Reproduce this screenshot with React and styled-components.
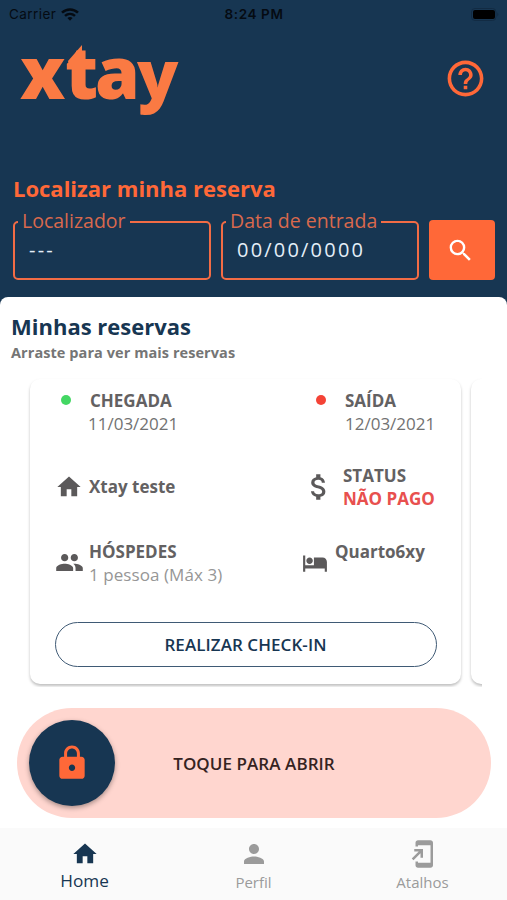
import styled, {createGlobalStyle} from "styled-components";
import {
    MdHome, MdPeople, MdAttachMoney, MdHotel, MdLock,
    MdSearch, MdPerson, MdHelpOutline, MdAddToHomeScreen
} from "react-icons/md";

const navy = "#173652";
const orange = "#ff6838";

const GlobalStyle = createGlobalStyle`
  * { box-sizing: border-box; }
  body {
    margin: 0;
    background: ${navy};
    font-family: "Open Sans", sans-serif;
  }
  svg { display: block; flex-shrink: 0; }
`

const Screen = styled.div`
  width: 507px;
  height: 900px;
  display: flex;
  flex-direction: column;
  overflow: hidden;
  background: ${navy};
`

const StatusBar = styled.div`
  height: 28px;
  padding: 0 8px 0 9px;
  display: grid;
  grid-template-columns: 1fr auto 1fr;
  align-items: center;
  font-family: Inter, sans-serif;
  font-size: 13.5px;
  color: #050b12;
`

const Carrier = styled.div`
  display: flex;
  align-items: center;
  gap: 5px;
  letter-spacing: 0.45px;
`

const Clock = styled.div`
  font-weight: 600;
  letter-spacing: 0.6px;
`

const Battery = styled.div`
  justify-self: end;
`

const Header = styled.header`
  height: 144px;
  padding: 14px 20px 0 18px;
  display: flex;
  justify-content: space-between;
  align-items: flex-start;
`

const LogoMark = styled.svg`
  width: 172px;
  height: 112px;
  margin-top: -22px;
  fill: #fa7a43;
`

const HelpButton = styled.button`
  margin-top: 15px;
  padding: 0;
  border: 0;
  background: none;
  color: ${orange};
`

const Search = styled.section`
  height: 125px;
  padding: 0 12px 0 13px;
`

const SearchTitle = styled.h1`
  margin: 0 0 6px;
  font-size: 22px;
  line-height: 33px;
  font-weight: 700;
  white-space: nowrap;
  color: ${orange};
`

const SearchForm = styled.div`
  display: flex;
  align-items: flex-end;
  gap: 10px;
`

const Field = styled.fieldset`
  width: 198px;
  height: 69px;
  min-width: 0;
  margin: 0;
  padding: 5px 14px 0;
  border: 2px solid #f26c45;
  border-radius: 5px;
  font-size: 20px;
  line-height: 24px;
  letter-spacing: 2.2px;
  white-space: nowrap;
  color: #e4eef8;
`

const Legend = styled.legend`
  margin-left: -11px;
  padding: 0 4px 0 4px;
  height: 22px;
  line-height: 20px;
  font-size: 19.5px;
  letter-spacing: 0;
  color: #d9694d;
`

const SearchButton = styled.button`
  width: 66px;
  height: 60px;
  padding: 0 4px 0 0;
  display: flex;
  align-items: center;
  justify-content: center;
  border: 0;
  border-radius: 4px;
  background: ${orange};
  color: #fff;
`

const Sheet = styled.main`
  flex: 1;
  padding-top: 13px;
  border-radius: 8px 8px 0 0;
  background: #fff;
`

const SheetTitle = styled.h2`
  margin: 0 0 1px 11px;
  font-size: 22px;
  line-height: 32px;
  font-weight: 700;
  color: ${navy};
`

const SheetHint = styled.p`
  margin: 0 0 0 11px;
  font-size: 14.5px;
  line-height: 20px;
  font-weight: 700;
  letter-spacing: 0.07px;
  color: #757575;
`

const Carousel = styled.div`
  width: 457px;
  height: 324px;
  margin-left: 25px;
  padding: 16px 0 0 5px;
  display: flex;
  gap: 10px;
  overflow: hidden;
`

const Card = styled.article`
  flex: 0 0 431px;
  height: 305px;
  padding: 10px 24.5px 0;
  border-radius: 10px;
  background: #fff;
  box-shadow: 0 2px 3px rgba(0, 0, 0, 0.25);
`

const Details = styled.div`
  display: grid;
  grid-template-columns: 246.5px 1fr;
  grid-template-rows: 75px 75.5px 82.5px;
`

const Detail = styled.div`
  display: flex;
  align-items: flex-start;
  padding-top: ${props => props.$top || 0}px;
`

const Marker = styled.div`
  width: ${props => props.$width}px;
  height: ${props => props.$height || 23}px;
  padding-left: ${props => props.$indent || 0}px;
  display: flex;
  align-items: center;
  flex-shrink: 0;
  color: #5b595a;
`

const Dot = styled.span`
  width: 10px;
  height: 10px;
  margin-bottom: 1px;
  border-radius: 50%;
  background: ${props => props.$color};
`

const Label = styled.div`
  font-size: 17px;
  line-height: 23px;
  font-weight: 700;
  white-space: nowrap;
  color: ${props => props.$color || "#636162"};
`

const Value = styled.div`
  margin-left: ${props => props.$shift || 0}px;
  font-size: 17px;
  line-height: 24px;
  white-space: nowrap;
  letter-spacing: ${props => props.$light ? "0.07px" : "0"};
  color: ${props => props.$light ? "#969696" : "#727272"};
`

const CheckInButton = styled.button`
  width: 382px;
  height: 45px;
  display: block;
  padding: 0 0 1px;
  border: 1.5px solid #3f5a75;
  border-radius: 23px;
  background: #fff;
  font: 600 17px "Open Sans", sans-serif;
  letter-spacing: 0.07px;
  color: ${navy};
`

const OpenSlider = styled.div`
  width: 474px;
  height: 110px;
  margin: 21px 0 0 17px;
  padding: 0 12px;
  display: grid;
  grid-template-columns: 86px 1fr 86px;
  align-items: center;
  border-radius: 55px;
  background: #ffd6cf;
  font-size: 17px;
  font-weight: 600;
  letter-spacing: 0.07px;
  text-align: center;
  color: #35231f;
`

const LockKnob = styled.div`
  width: 86px;
  height: 86px;
  display: flex;
  align-items: center;
  justify-content: center;
  border-radius: 50%;
  background: ${navy};
  color: ${orange};
  box-shadow: 0 2px 5px rgba(0, 0, 0, 0.35);
`

const TabBar = styled.nav`
  height: 72px;
  display: grid;
  grid-template-columns: repeat(3, 1fr);
  background: #fafafa;
`

const Tab = styled.div`
  display: flex;
  flex-direction: column;
  align-items: center;
  padding-top: 10px;
  font-size: ${props => props.$active ? 17.2 : 15}px;
  line-height: 24px;
  color: ${props => props.$active ? navy : "#9b9b9b"};
`

const TabIcon = styled.div`
  height: 31px;
  display: flex;
  align-items: center;
`

const TabLabel = styled.span`
  padding-top: ${props => props.$active ? 0 : 1}px;
`

const tabs = [
    {name: "Home", Icon: MdHome, size: 28, active: true},
    {name: "Perfil", Icon: MdPerson, size: 30},
    {name: "Atalhos", Icon: MdAddToHomeScreen, size: 30},
]

function Logo() {
    return (
        <LogoMark viewBox="0 -22 172 112" aria-label="xtay">
            <text y="57" fontFamily="Open Sans" fontWeight="800" fontSize="72">
                <tspan x="2">x</tspan>
                <tspan x="47">t</tspan>
                <tspan x="77">a</tspan>
                <tspan x="119" fontSize="68">y</tspan>
            </text>
            {/* spark on top of the t */}
            <path d="M50 19 L64 3 V17 H76 L66 27 H52 Z"/>
        </LogoMark>
    )
}

function WifiIcon() {
    return (
        <svg width="18" height="13" viewBox="0 0 18 13" fill="none" stroke="#050b12" strokeWidth="2.5">
            <path d="M1 4.7 C5.5 .3 12.5 .3 17 4.7"/>
            <path d="M4 7.9 C7 5.2 11 5.2 14 7.9"/>
            <path d="M6.4 10 Q9 8 11.6 10 L9 12.7 Z" fill="#050b12" stroke="none"/>
        </svg>
    )
}

function BatteryIcon() {
    return (
        <svg width="28" height="13" viewBox="0 0 28 13">
            <rect x=".5" y=".5" width="24.5" height="12" rx="3.5" fill="none" stroke="#122b43"/>
            <rect x="2" y="2" width="22" height="9" rx="2" fill="#000"/>
            <path d="M26.3 4.5 q2 2 0 4 z" fill="#122b43"/>
        </svg>
    )
}

function ReservationCard() {
    return (
        <Card>
            <Details>
                <Detail>
                    <Marker $width={35.5} $indent={6}><Dot $color="#43d763"/></Marker>
                    <div>
                        <Label>CHEGADA</Label>
                        <Value $shift={-2}>11/03/2021</Value>
                    </div>
                </Detail>
                <Detail>
                    <Marker $width={44} $indent={15}><Dot $color="#f44336"/></Marker>
                    <div>
                        <Label>SAÍDA</Label>
                        <Value>12/03/2021</Value>
                    </div>
                </Detail>
                <Detail $top={11}>
                    <Marker $width={34.5}><MdHome size={28}/></Marker>
                    <Label>Xtay teste</Label>
                </Detail>
                <Detail>
                    <Marker $width={42} $height={46} $indent={1}><MdAttachMoney size={34}/></Marker>
                    <div>
                        <Label>STATUS</Label>
                        <Label $color="#e8504e">NÃO PAGO</Label>
                    </div>
                </Detail>
                <Detail>
                    <Marker $width={34.5} $height={46}><MdPeople size={29}/></Marker>
                    <div>
                        <Label>HÓSPEDES</Label>
                        <Value $light>1 pessoa (Máx 3)</Value>
                    </div>
                </Detail>
                <Detail>
                    <Marker $width={34} $height={46} $indent={1}><MdHotel size={26}/></Marker>
                    <Label>Quarto6xy</Label>
                </Detail>
            </Details>
            <CheckInButton>REALIZAR CHECK-IN</CheckInButton>
        </Card>
    )
}

export default function App() {
    return (
        <Screen>
            <GlobalStyle/>
            <StatusBar>
                <Carrier>Carrier <WifiIcon/></Carrier>
                <Clock>8:24 PM</Clock>
                <Battery><BatteryIcon/></Battery>
            </StatusBar>

            <Header>
                <Logo/>
                <HelpButton><MdHelpOutline size={43}/></HelpButton>
            </Header>

            <Search>
                <SearchTitle>Localizar minha reserva</SearchTitle>
                <SearchForm>
                    <Field><Legend>Localizador</Legend>---</Field>
                    <Field><Legend>Data de entrada</Legend>00/00/0000</Field>
                    <SearchButton><MdSearch size={29}/></SearchButton>
                </SearchForm>
            </Search>

            <Sheet>
                <SheetTitle>Minhas reservas</SheetTitle>
                <SheetHint>Arraste para ver mais reservas</SheetHint>
                <Carousel>
                    <ReservationCard/>
                    <Card/>
                </Carousel>
                <OpenSlider>
                    <LockKnob><MdLock size={38}/></LockKnob>
                    <span>TOQUE PARA ABRIR</span>
                </OpenSlider>
            </Sheet>

            <TabBar>
                {tabs.map(({name, Icon, size, active}) => (
                    <Tab key={name} $active={active}>
                        <TabIcon><Icon size={size}/></TabIcon>
                        <TabLabel $active={active}>{name}</TabLabel>
                    </Tab>
                ))}
            </TabBar>
        </Screen>
    )
}
